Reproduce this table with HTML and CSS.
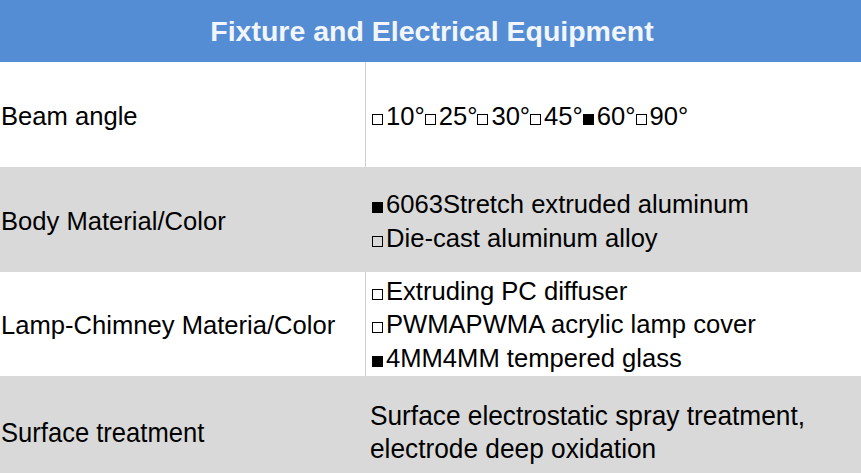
FILE: index.html
```html
<!DOCTYPE html>
<html>
<head>
<meta charset="utf-8">
<link rel="stylesheet" href="styles.css">
</head>
<body>
<div class="sheet">
  <div class="head">Fixture and Electrical Equipment</div>
  <div class="row white r1">
    <div class="label">Beam angle</div>
    <div class="value"><span><i class="box"></i>10°<i class="box"></i>25°<i class="box"></i>30°<i class="box"></i>45°<i class="box on"></i>60°<i class="box"></i>90°</span></div>
  </div>
  <div class="row gray r2">
    <div class="label">Body Material/Color</div>
    <div class="value">
      <span><i class="box on"></i>6063Stretch extruded aluminum</span>
      <span><i class="box"></i>Die-cast aluminum alloy</span>
    </div>
  </div>
  <div class="row white r3">
    <div class="label">Lamp-Chimney Materia/Color</div>
    <div class="value">
      <span><i class="box"></i>Extruding PC diffuser</span>
      <span><i class="box"></i>PWMAPWMA acrylic lamp cover</span>
      <span><i class="box on"></i>4MM4MM tempered glass</span>
    </div>
  </div>
  <div class="row gray r4">
    <div class="label narrow"><span class="sq sq-label">Surface treatment</span></div>
    <div class="value narrow">
      <span class="sq">Surface electrostatic spray treatment,</span>
      <span class="sq">electrode deep oxidation</span>
    </div>
  </div>
</div>
</body>
</html>
```
FILE: styles.css
```css
html, body {
  margin: 0;
  padding: 0;
  background: #ffffff;
  overflow: hidden;
}
.sheet {
  width: 861px;
  font-family: "Liberation Sans", Arial, sans-serif;
  color: #000;
}
.head {
  height: 62px;
  background: #548dd4;
  color: #f2f6fc;
  font-weight: bold;
  font-size: 28.5px;
  display: flex;
  align-items: center;
  justify-content: center;
  padding-left: 3px;
}
.row {
  display: grid;
  grid-template-columns: 365px 1px 1fr;
  font-size: 25.6px;
  line-height: 33.5px;
}
.row::before {
  content: "";
  grid-column: 2;
  grid-row: 1;
}
.white::before { background: #cfcfcf; }
.white { background: #ffffff; }
.gray { background: #d9d9d9; }
.r1 { height: 105px; }
.r2 { height: 105px; }
.r3 { height: 104px; }
.r4 { height: 108px; }
.label {
  grid-column: 1;
  grid-row: 1;
  display: flex;
  align-items: center;
  padding-left: 1px;
  padding-top: 4px;
}
.value {
  grid-column: 3;
  grid-row: 1;
  display: flex;
  flex-direction: column;
  justify-content: center;
  padding-left: 6px;
  padding-top: 4px;
  white-space: nowrap;
}
.r3 .value { padding-top: 2px; }
.box {
  display: inline-block;
  width: 11px;
  height: 11px;
  box-sizing: border-box;
  border: 1px solid #000;
  margin-right: 3px;
  vertical-align: baseline;
}
.box.on { background: #000; }
.narrow { font-size: 27.5px; line-height: 33px; }
.value.narrow { padding-left: 4px; }
.sq {
  display: inline-block;
  transform: scaleX(0.955);
  transform-origin: left center;
  white-space: nowrap;
}
.sq-label { transform: scaleX(0.93); }
```
